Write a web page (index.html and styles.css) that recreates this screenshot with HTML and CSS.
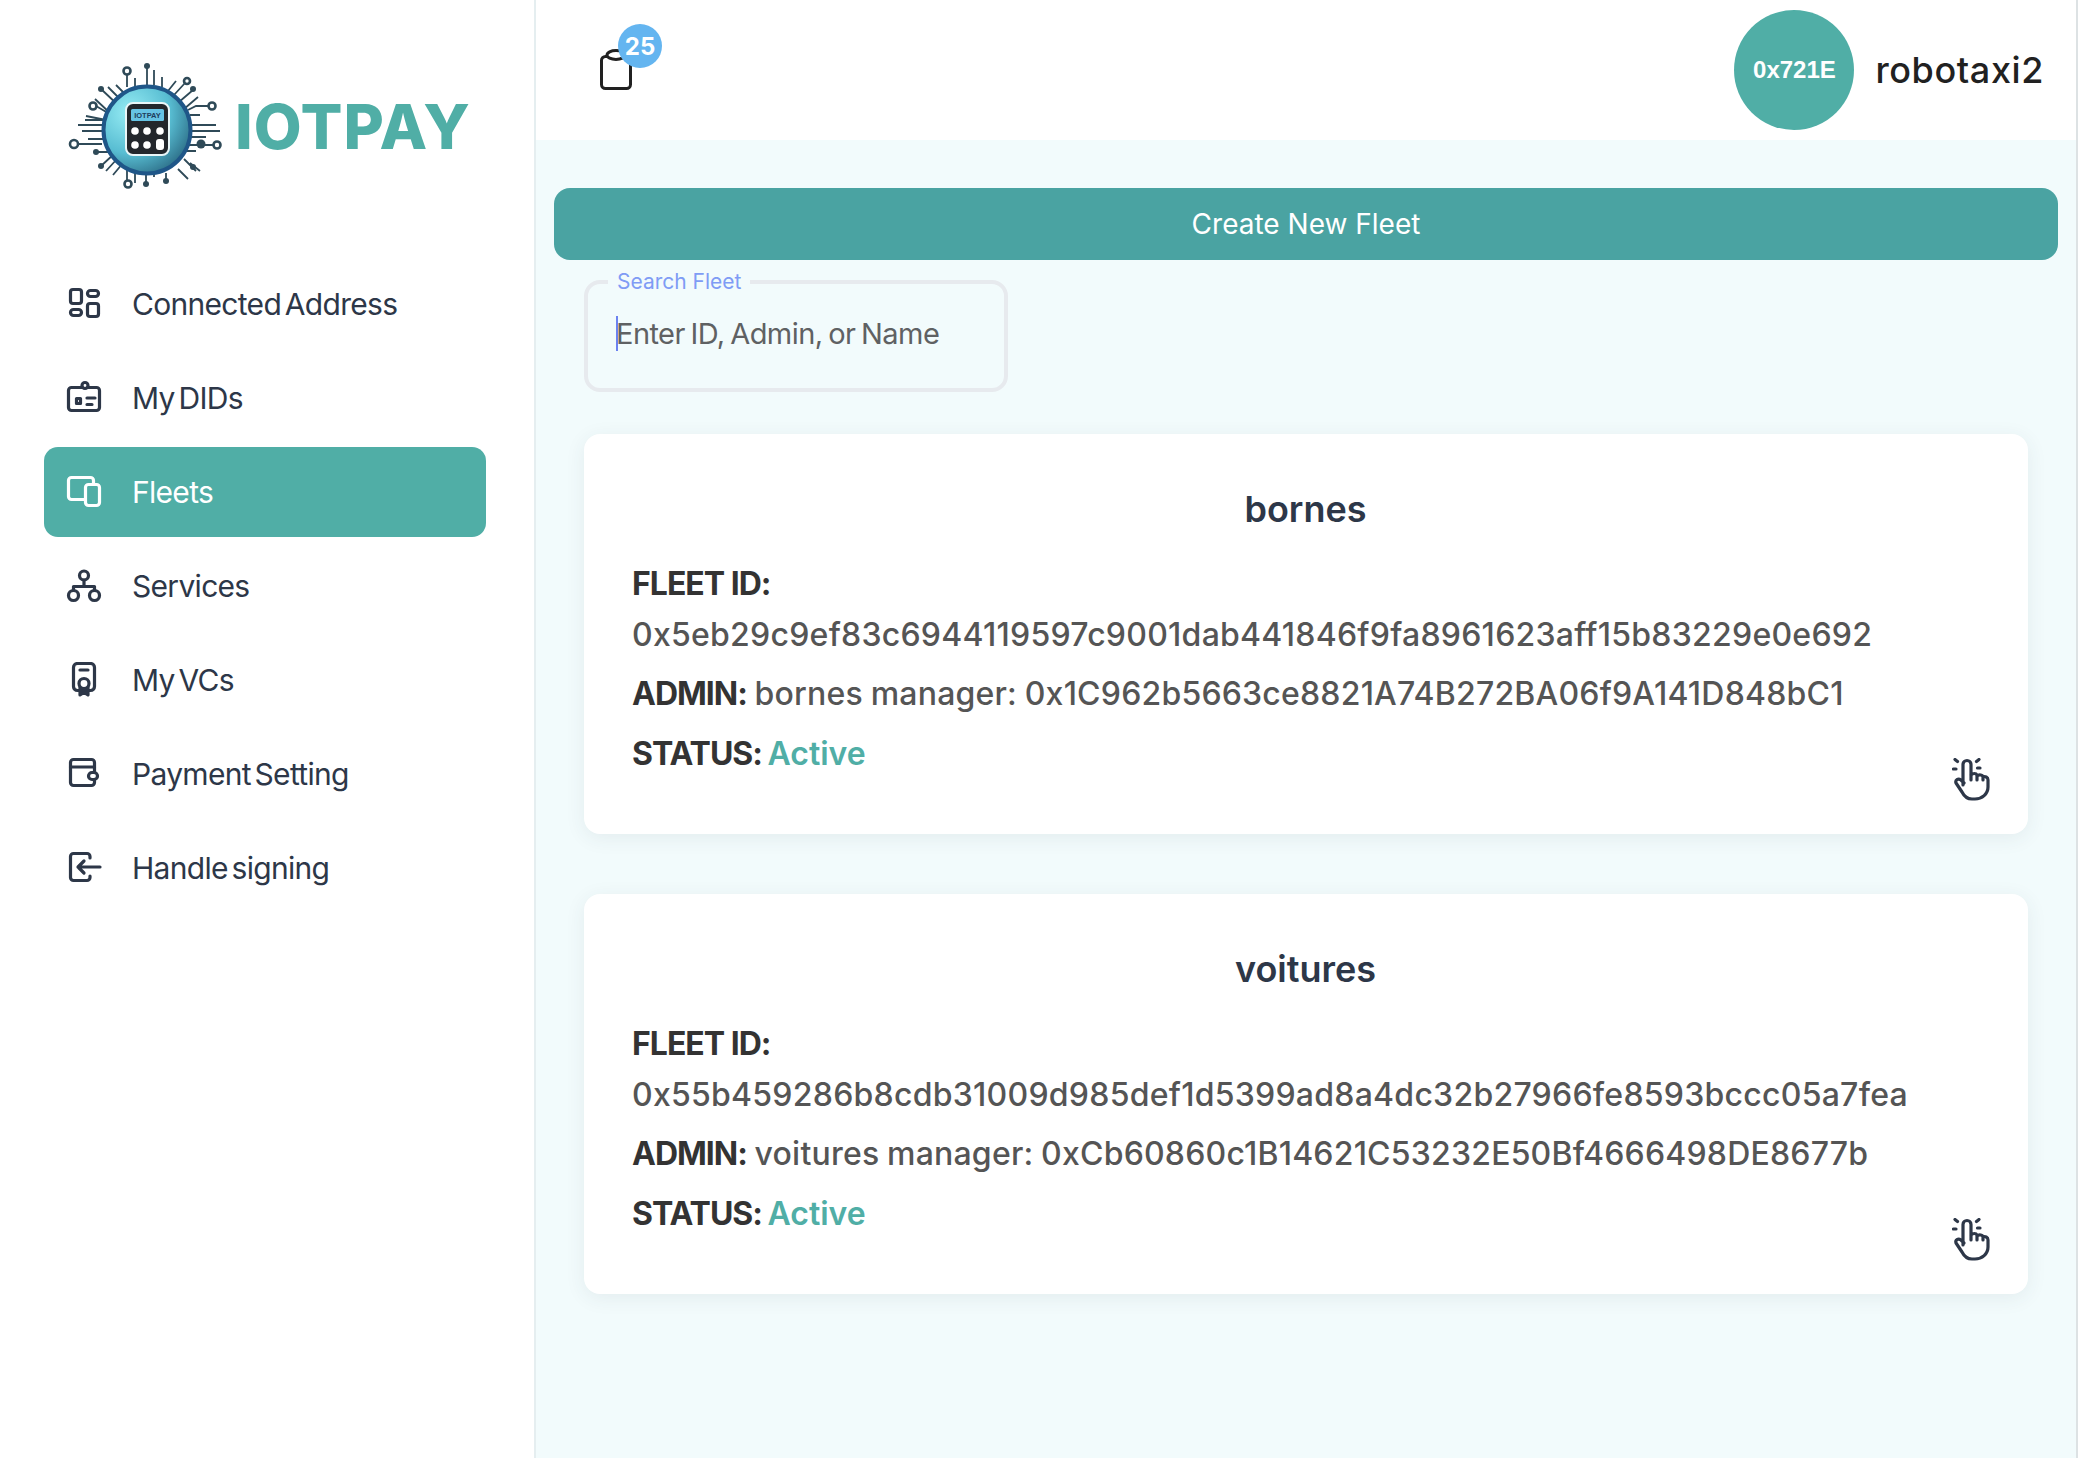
FILE: index.html
```html
<!DOCTYPE html>
<html lang="en">
<head>
    <meta charset="UTF-8">
    <meta name="viewport" content="width=device-width, initial-scale=1.0">
    <title>IOTPAY Fleets</title>
    <link rel="stylesheet" href="styles.css">
</head>
<body>
    <div class="app">
        <aside class="sidebar">
            <div class="logo">
                <svg class="logo-mark" width="170" height="140" viewBox="0 0 170 140">
                    <defs>
                        <radialGradient id="globe" cx="30%" cy="30%" r="85%">
                            <stop offset="0" stop-color="#96ecf4"/>
                            <stop offset="0.55" stop-color="#58bdd2"/>
                            <stop offset="1" stop-color="#25607a"/>
                        </radialGradient>
                    </defs>
                    <g class="traces">
                        <path d="M67 19V32M75 23V34M87 12V30M94 15V30M102 22V32"/>
                        <path d="M125 28L114 40M116 26L108 36M133 35L119 47M138 42L124 54"/>
                        <path d="M149 51H136L128 55M130 60H140"/>
                        <path d="M124 70H156M124 76H160M124 82H146"/>
                        <path d="M154 90H124M124 96H136"/>
                        <path d="M130 108L140 116M124 104L136 116M118 114L128 124"/>
                        <path d="M67 126V112M75 128V116M86 128V120M94 122V118M106 125V118"/>
                        <path d="M41 111L54 99M46 116L57 104M53 120L63 108"/>
                        <path d="M36 97H48L52 94"/>
                        <path d="M17 89H42M28 84H44M22 76H42M18 70H42M25 65H46L26 61"/>
                        <path d="M36 51L48 58M41 34L58 50M35 44L50 58M48 32L62 46M56 30L66 40"/>
                    </g>
                    <g class="trace-dots">
                        <circle cx="87" cy="11" r="3"/>
                        <circle cx="41" cy="34" r="3"/>
                        <circle cx="133" cy="34" r="3"/>
                        <circle cx="141" cy="89" r="4.5"/>
                        <circle cx="36" cy="97" r="3"/>
                        <circle cx="41" cy="111" r="3"/>
                        <circle cx="86" cy="129" r="3"/>
                        <circle cx="106" cy="126" r="3"/>
                        <circle cx="133" cy="112" r="3"/>
                    </g>
                    <g class="trace-rings">
                        <circle cx="67" cy="16" r="3.5"/>
                        <circle cx="127" cy="26" r="3"/>
                        <circle cx="152" cy="51" r="3.5"/>
                        <circle cx="14" cy="89" r="4"/>
                        <circle cx="157" cy="90" r="3.5"/>
                        <circle cx="68" cy="129" r="3.5"/>
                        <circle cx="33" cy="51" r="3.5"/>
                    </g>
                    <circle cx="87" cy="75" r="43.5" fill="url(#globe)" stroke="#1f5688" stroke-width="4"/>
                    <rect x="66" y="48" width="43" height="52" rx="7" fill="#23272c" stroke="#e9f6f8" stroke-width="2"/>
                    <rect x="71" y="54" width="33" height="12" rx="1.5" fill="#66c3e4"/>
                    <text class="logo-small" x="87.5" y="63" text-anchor="middle">IOTPAY</text>
                    <g fill="#fff">
                        <circle cx="75" cy="76" r="3.8"/>
                        <circle cx="87" cy="76" r="3.8"/>
                        <circle cx="100" cy="76" r="3.8"/>
                        <circle cx="75" cy="90" r="3.8"/>
                        <circle cx="87" cy="90" r="3.8"/>
                        <rect x="96" y="84" width="8" height="11" rx="3"/>
                    </g>
                </svg>
                <span class="logo-text">IOTPAY</span>
            </div>

            <nav class="nav">
                <a class="nav-item" href="#">
                    <svg class="nav-icon" viewBox="0 0 36 36">
                        <rect x="4.5" y="3.5" width="11" height="14" rx="2.5"/>
                        <rect x="4.5" y="23.5" width="11" height="6" rx="3"/>
                        <rect x="21.5" y="4.5" width="11" height="6" rx="3"/>
                        <rect x="21.5" y="17.5" width="11" height="13" rx="2.5"/>
                    </svg>
                    Connected Address
                </a>
                <a class="nav-item" href="#">
                    <svg class="nav-icon" viewBox="0 0 36 36">
                        <rect x="2.5" y="7.5" width="31" height="23" rx="3"/>
                        <circle cx="19" cy="5.5" r="3" fill="#fff"/>
                        <rect x="10.5" y="18.5" width="4" height="5"/>
                        <path d="M21 18H29M21 24.5H26"/>
                    </svg>
                    My DIDs
                </a>
                <a class="nav-item active" href="#">
                    <svg class="nav-icon" viewBox="0 0 36 36">
                        <rect x="2.5" y="3.5" width="25" height="22" rx="3"/>
                        <rect class="phone" x="19.5" y="10.5" width="14" height="21" rx="3"/>
                    </svg>
                    Fleets
                </a>
                <a class="nav-item" href="#">
                    <svg class="nav-icon" viewBox="0 0 36 36">
                        <circle cx="18" cy="7.5" r="4.5"/>
                        <circle cx="7.5" cy="27.5" r="5"/>
                        <circle cx="28.5" cy="27.5" r="5"/>
                        <path d="M18 12V18M7.5 22V18.5H28.5V22"/>
                    </svg>
                    Services
                </a>
                <a class="nav-item" href="#">
                    <svg class="nav-icon" viewBox="0 0 36 36">
                        <rect x="7.5" y="1.5" width="21" height="27" rx="4"/>
                        <path d="M14 8H22"/>
                        <path d="M14 25V33L18 30.5L22 33V25"/>
                        <circle cx="18" cy="21.5" r="5" fill="#fff"/>
                    </svg>
                    My VCs
                </a>
                <a class="nav-item" href="#">
                    <svg class="nav-icon" viewBox="0 0 36 36">
                        <path d="M28.5 15V6.5a3 3 0 0 0-3-3H7.5a3 3 0 0 0-3 3V26.5a3 3 0 0 0 3 3H25.5a3 3 0 0 0 3-3V24"/>
                        <path d="M4.5 11H28.5"/>
                        <rect x="22.5" y="16.5" width="9" height="7" rx="3.5"/>
                    </svg>
                    Payment Setting
                </a>
                <a class="nav-item" href="#">
                    <svg class="nav-icon" viewBox="0 0 36 36">
                        <path d="M24 8V6.5a3 3 0 0 0-3-3H7.5a3 3 0 0 0-3 3V27.5a3 3 0 0 0 3 3H21a3 3 0 0 0 3-3V26"/>
                        <path d="M34 17H12M18 11L12 17L18 23"/>
                    </svg>
                    Handle signing
                </a>
            </nav>
        </aside>

        <div class="main">
            <header class="topbar">
                <div class="tasks">
                    <svg class="clipboard" width="36" height="44" viewBox="0 0 36 44">
                        <rect x="2.5" y="8.5" width="29" height="32" rx="4"/>
                        <ellipse cx="17" cy="7" rx="9" ry="4.5" fill="#fff"/>
                    </svg>
                    <span class="badge">25</span>
                </div>
                <div class="user">
                    <div class="avatar">0x721E</div>
                    <span class="user-name">robotaxi2</span>
                </div>
            </header>

            <main class="content">
                <button class="create-btn" type="button">Create New Fleet</button>

                <fieldset class="search">
                    <legend>Search Fleet</legend>
                    <div class="search-row">
                        <span class="caret"></span>
                        <input type="text" placeholder="Enter ID, Admin, or Name">
                    </div>
                </fieldset>

                <section class="card">
                    <h2>bornes</h2>
                    <p class="fleet-label"><b>FLEET ID:</b></p>
                    <p class="fleet-id">0x5eb29c9ef83c6944119597c9001dab441846f9fa8961623aff15b83229e0e692</p>
                    <p class="fleet-admin"><b>ADMIN:</b> bornes manager: 0x1C962b5663ce8821A74B272BA06f9A141D848bC1</p>
                    <div class="fleet-status">
                        <p><b>STATUS:</b> <span class="active-text">Active</span></p>
                        <svg class="hand" width="38" height="44" viewBox="0 0 38 44">
                            <path d="M11 27V6.5a4 4 0 0 1 8 0V22M19 17c2-2 5-2 6 0v5M25 18c2-2 6-1 6 1v3M31 19c2-1 5 0 5 3v7c0 7-6 12-13 12h-3c-5 0-8-3-10-7l-6-9c-1-3 2-5 5-3l3 3"/>
                            <path d="M3 1.5L5.5 3.5M1.5 11H4M27 1.5L24.5 3.5M28 10H25.5"/>
                        </svg>
                    </div>
                </section>

                <section class="card">
                    <h2>voitures</h2>
                    <p class="fleet-label"><b>FLEET ID:</b></p>
                    <p class="fleet-id">0x55b459286b8cdb31009d985def1d5399ad8a4dc32b27966fe8593bccc05a7fea</p>
                    <p class="fleet-admin"><b>ADMIN:</b> voitures manager: 0xCb60860c1B14621C53232E50Bf4666498DE8677b</p>
                    <div class="fleet-status">
                        <p><b>STATUS:</b> <span class="active-text">Active</span></p>
                        <svg class="hand" width="38" height="44" viewBox="0 0 38 44">
                            <path d="M11 27V6.5a4 4 0 0 1 8 0V22M19 17c2-2 5-2 6 0v5M25 18c2-2 6-1 6 1v3M31 19c2-1 5 0 5 3v7c0 7-6 12-13 12h-3c-5 0-8-3-10-7l-6-9c-1-3 2-5 5-3l3 3"/>
                            <path d="M3 1.5L5.5 3.5M1.5 11H4M27 1.5L24.5 3.5M28 10H25.5"/>
                        </svg>
                    </div>
                </section>
            </main>
        </div>
    </div>
</body>
</html>
```

FILE: styles.css
```css
* {
    box-sizing: border-box;
}

body {
    margin: 0;
    padding: 0;
    font-family: Inter, "Noto Sans", sans-serif;
    color: #2d3748;
    background: #fff;
}

.app {
    display: flex;
    height: 1458px;
    padding-right: 2px;
    overflow: hidden;
}

/* sidebar */
.sidebar {
    width: 536px;
    flex-shrink: 0;
    background: #fff;
    border-right: 2px solid #e5eef0;
    padding: 55px 48px 0 44px;
}

.logo {
    display: flex;
    align-items: center;
    gap: 5px;
    height: 140px;
    margin-bottom: 64px;
    margin-left: 16px;
}

.logo-mark {
    flex-shrink: 0;
}

.traces path {
    fill: none;
    stroke: #2f4a58;
    stroke-width: 1.8;
}

.trace-dots circle {
    fill: #2f4a58;
}

.trace-rings circle {
    fill: #fff;
    stroke: #2f4a58;
    stroke-width: 2.6;
}

.logo-small {
    font-family: "Liberation Sans", sans-serif;
    font-size: 7.5px;
    font-weight: 700;
    fill: #1d3c5c;
}

.logo-text {
    font-size: 62px;
    font-weight: 800;
    color: #50aea6;
    letter-spacing: 1px;
    line-height: 1;
    margin-top: 4px;
}

.nav {
    display: flex;
    flex-direction: column;
    gap: 4px;
}

.nav-item {
    display: flex;
    align-items: center;
    gap: 30px;
    height: 90px;
    padding-left: 22px;
    border-radius: 14px;
    font-size: 30px;
    letter-spacing: -0.7px;
    word-spacing: -4px;
    color: #2d3748;
    text-decoration: none;
}

.nav-icon {
    width: 36px;
    height: 36px;
    flex-shrink: 0;
    fill: none;
    stroke: #2d3748;
    stroke-width: 3.2;
    stroke-linecap: round;
    stroke-linejoin: round;
}

.nav-item.active {
    background: #50aea6;
    color: #fff;
}

.nav-item.active .nav-icon {
    stroke: #fff;
}

.nav-item.active .phone {
    fill: #50aea6;
}

/* top bar */
.main {
    flex: 1;
    min-width: 0;
    display: flex;
    flex-direction: column;
    background: #f2fbfc;
    border-right: 2px solid #dde2e4;
}

.topbar {
    height: 140px;
    flex-shrink: 0;
    display: flex;
    justify-content: space-between;
    align-items: center;
    background: #fff;
    padding: 0 32px 0 63px;
}

.tasks {
    position: relative;
    width: 36px;
    height: 44px;
}

.clipboard {
    display: block;
    fill: none;
    stroke: #212121;
    stroke-width: 3;
}

.badge {
    position: absolute;
    top: -24px;
    left: 19px;
    width: 44px;
    height: 44px;
    border-radius: 50%;
    background: #64b5f0;
    color: #fff;
    font-size: 24px;
    font-weight: 700;
    display: flex;
    align-items: center;
    justify-content: center;
}

.user {
    display: flex;
    align-items: center;
    gap: 21px;
}

.avatar {
    width: 120px;
    height: 120px;
    border-radius: 50%;
    background: #50aea6;
    color: #fff;
    font-family: "Liberation Sans", Arial, sans-serif;
    font-size: 24px;
    font-weight: 700;
    display: flex;
    align-items: center;
    justify-content: center;
}

.user-name {
    font-size: 36px;
    font-weight: 500;
    letter-spacing: 0.6px;
    color: #212121;
}

/* content */
.content {
    flex: 1;
    padding: 48px 18px;
}

.create-btn {
    display: block;
    width: 100%;
    height: 72px;
    background: #4aa3a2;
    color: #fff;
    border: none;
    border-radius: 16px;
    font-family: inherit;
    font-size: 28px;
    cursor: pointer;
}

.search {
    width: 424px;
    height: 122px;
    margin: 10px 0 42px 30px;
    padding: 0 28px;
    border: 4px solid #e7eaee;
    border-radius: 16px;
    min-width: 0;
}

.search legend {
    margin-left: -8px;
    padding: 0 9px;
    font-size: 21px;
    line-height: 24px;
    color: #7f9cf5;
}

.search-row {
    display: flex;
    align-items: center;
    margin-top: 21px;
    height: 36px;
}

.caret {
    width: 2px;
    height: 35px;
    margin-right: -2px;
    background: #6c82f0;
    flex-shrink: 0;
}

.search input {
    flex: 1;
    min-width: 0;
    border: none;
    outline: none;
    padding: 0;
    background: transparent;
    font-family: inherit;
    font-size: 29px;
    letter-spacing: -0.55px;
    word-spacing: -2px;
    color: #555;
}

.search input::placeholder {
    color: #5f6163;
    opacity: 1;
}

.card {
    margin: 0 30px 60px;
    height: 400px;
    padding: 50px 49px 0 48px;
    background: #fff;
    border-radius: 16px;
    box-shadow: 0 4px 20px rgba(45, 70, 80, 0.08);
    color: #555;
    font-size: 32px;
    font-weight: 500;
}

.card h2 {
    margin: 0 0 27px;
    font-size: 36px;
    font-weight: 600;
    line-height: 50px;
    text-align: center;
    color: #2d3748;
}

.card p {
    margin: 0;
    line-height: 45px;
}

.card b {
    font-weight: 700;
    letter-spacing: -1px;
    color: #333;
}

.fleet-label {
    margin-bottom: 6px !important;
}

.fleet-id {
    letter-spacing: 0.25px;
}

.fleet-admin {
    margin-top: 14px !important;
    word-spacing: -1px;
    letter-spacing: 0.2px;
}

.fleet-status {
    display: flex;
    justify-content: space-between;
    align-items: flex-start;
    margin-top: 15px;
    margin-right: -11px;
    word-spacing: -3px;
}

.active-text {
    color: #50aea6;
    font-weight: 600;
}

.hand {
    margin-top: 27px;
    flex-shrink: 0;
    fill: none;
    stroke: #2d3748;
    stroke-width: 3.2;
    stroke-linecap: round;
    stroke-linejoin: round;
}
```
